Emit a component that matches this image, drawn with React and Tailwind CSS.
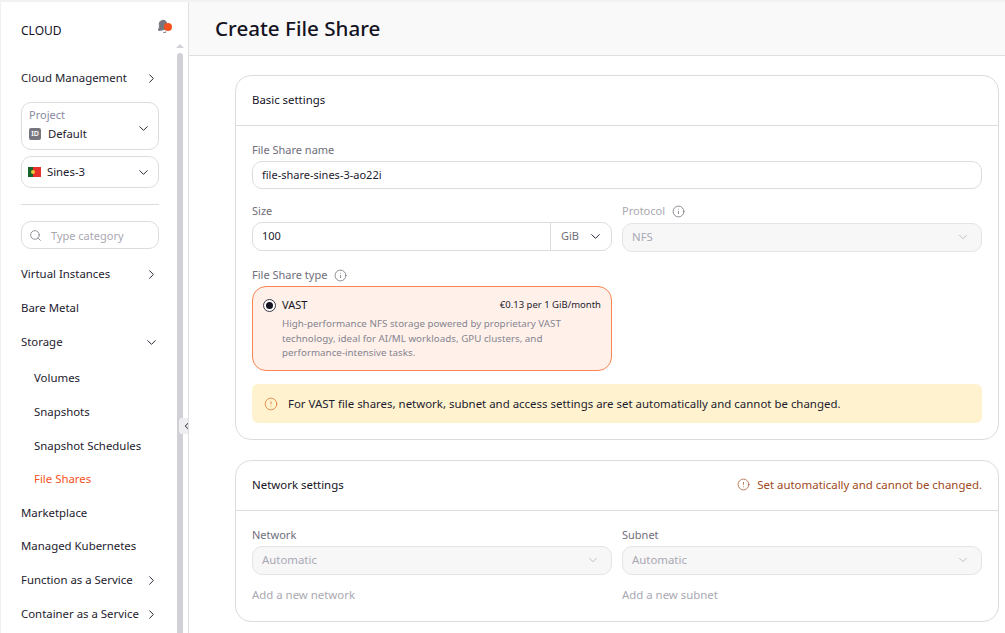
import React from 'react';
import { Bell, ChevronDown, ChevronLeft, ChevronRight, Search, Info, CircleAlert } from 'lucide-react';

const FONT = { fontFamily: '"Noto Sans", sans-serif' };

function NavRow({ label, icon, sub, active, className = 'h-[34px]' }) {
  return (
    <div className={`flex items-center justify-between whitespace-nowrap text-[11.4px] ${className} ${sub ? 'pl-[13px]' : ''} ${active ? 'text-[#f4511e]' : 'text-[#1d1b2e]'}`}>
      <span>{label}</span>
      {icon === 'right' && <ChevronRight size={15} strokeWidth={1.5} />}
      {icon === 'down' && <ChevronDown size={15} strokeWidth={1.5} />}
    </div>
  );
}

function Field({ label, info, disabled, className = '', children }) {
  return (
    <div className={className}>
      <div className={`flex items-center gap-[7px] h-[17px] text-[11px] ${disabled ? 'text-[#a9a8b2]' : 'text-[#6f6e7a]'}`}>
        {label}
        {info && <Info size={13} strokeWidth={1.3} className="text-[#5f5e6a]" />}
      </div>
      {children}
    </div>
  );
}

function DisabledSelect({ value, className = 'mt-[3px]' }) {
  return (
    <div className={`${className} flex items-center justify-between h-[29px] px-[9px] pb-[1px] rounded-[10px] border border-[#e4e4e8] bg-[#f7f7f8] text-[11.4px] text-[#a9a8b2]`}>
      {value}
      <ChevronDown size={14} strokeWidth={1.2} className="text-[#a9a8b2] mr-[2px]" />
    </div>
  );
}

function Sidebar() {
  return (
    <aside className="relative w-[189px] shrink-0 h-full flex pl-[20px] border-r border-[#dfdfe3] border-l border-l-[#f0f0f2] overflow-hidden">
      <div className="w-[138px] shrink-0">
        <div className="flex items-center h-[59px] pb-[2px]">
          <span className="text-[12px] text-[#14131f]">CLOUD</span>
        </div>
        <NavRow label="Cloud Management" icon="right" />
        <div className="mt-[7px] h-[48px] rounded-[10px] border border-[#dcdce0] px-[7px] pt-[4px]">
          <div className="text-[11px] leading-[15px] text-[#8a89a0]">Project</div>
          <div className="mt-[3px] flex items-center justify-between text-[11.3px] leading-[18px] text-[#1d1b2e]">
            <div className="flex items-center gap-[7px]">
              <span className="w-[12px] h-[12px] rounded-[2px] bg-[#77767f] text-white text-[7px] leading-[12px] text-center font-semibold">ID</span>
              Default
            </div>
            <ChevronDown size={15} strokeWidth={1.5} className="-mt-[12px]" />
          </div>
        </div>
        <div className="mt-[6px] h-[32px] rounded-[10px] border border-[#dcdce0] pl-[6px] pr-[7px] flex items-center justify-between text-[11.3px] text-[#1d1b2e]">
          <div className="flex items-center gap-[6px]">
            <svg width="13" height="10" viewBox="0 0 13 10">
              <rect width="13" height="10" fill="#e8302c" />
              <rect width="5" height="10" fill="#14642c" />
              <circle cx="5" cy="5" r="2" fill="#e9c93a" />
            </svg>
            Sines-3
          </div>
          <ChevronDown size={15} strokeWidth={1.5} />
        </div>
        <div className="mt-[16px] border-t border-[#dcdce0]" />
        <div className="mt-[16px] h-[28px] rounded-[10px] border border-[#dcdce0] px-[7px] pt-[2px] flex items-center gap-[9px] text-[11px] text-[#a9a8b2]">
          <Search size={13} strokeWidth={1.4} className="text-[#77767f] -mt-[2px]" />
          Type category
        </div>
        <div className="mt-[8px]">
          <NavRow label="Virtual Instances" icon="right" />
          <NavRow label="Bare Metal" />
          <NavRow label="Storage" icon="down" />
          <NavRow label="Volumes" sub className="h-[34px] mt-[2px]" />
          <NavRow label="Snapshots" sub />
          <NavRow label="Snapshot Schedules" sub className="h-[33.5px]" />
          <NavRow label="File Shares" sub active className="h-[33px]" />
          <NavRow label="Marketplace" />
          <NavRow label="Managed Kubernetes" className="h-[33.5px] pb-[1px]" />
          <NavRow label="Function as a Service" icon="right" />
          <NavRow label="Container as a Service" icon="right" />
        </div>
      </div>
      {/* scrollbar */}
      <div className="ml-[18px] w-[6px] shrink-0 pt-[42px] flex flex-col items-center">
        <div className="w-0 h-0 border-x-[4px] border-x-transparent border-b-[4px] border-b-[#d3d2d8]" />
        <div className="mt-[5px] w-[6px] flex-1 rounded-t-[3px] bg-[#d1d0d6]" />
      </div>
      <div className="absolute left-[178px] top-[416px] w-[15px] h-[16px] rounded-[3px] bg-[#eeeef0] flex items-center justify-center text-[#1d1b2e]">
        <ChevronLeft size={14} strokeWidth={1.6} />
      </div>
      <div className="absolute left-[155px] top-[17px] text-[#77767f]">
        <Bell size={15} fill="#77767f" strokeWidth={1.5} className="-rotate-12" />
        <span className="absolute left-[8px] top-[4px] w-[8px] h-[8px] rounded-full bg-[#f4511e]" />
      </div>
    </aside>
  );
}

export default function App() {
  return (
    <div style={FONT} className="w-[1005px] h-[633px] flex overflow-hidden bg-white border-t-2 border-t-[#f1f1f3]">
      <Sidebar />
      <main className="flex-1 min-w-0 flex flex-col">
        <header className="h-[54px] shrink-0 bg-[#f9f9fa] border-b border-[#dfdfe3] pl-[26px] flex items-center">
          <h1 className="text-[20.6px] font-medium text-[#14131f]">Create File Share</h1>
        </header>
        <div className="pl-[46px] pr-[6px] pt-[19px]">
          <section className="h-[365px] rounded-[16px] border border-[#dcdce0]">
            <div className="h-[50px] border-b border-[#dcdce0] px-[16px] pb-[2px] flex items-center text-[11.4px] text-[#14131f]">
              Basic settings
            </div>
            <div className="px-[16px] pt-[16px]">
              <Field label="File Share name">
                <div className="mt-[2px] h-[28px] rounded-[10px] border border-[#dcdce0] px-[9px] flex items-center text-[11px] text-[#1d1b2e]">
                  file-share-sines-3-ao22i
                </div>
              </Field>
              <div className="mt-[14px] grid grid-cols-2 gap-[10px]">
                <Field label="Size">
                  <div className="mt-[2px] h-[29px] rounded-[10px] border border-[#dcdce0] flex text-[11px] text-[#1d1b2e]">
                    <div className="flex-1 px-[9px] flex items-center">100</div>
                    <div className="w-[61px] border-l border-[#dcdce0] pl-[10px] pr-[8px] flex items-center justify-between text-[#6f6e7a]">
                      GiB
                      <ChevronDown size={15} strokeWidth={1.5} className="text-[#1d1b2e]" />
                    </div>
                  </div>
                </Field>
                <Field label="Protocol" info disabled>
                  <DisabledSelect value="NFS" />
                </Field>
              </div>
              <Field label="File Share type" info className="mt-[15px]">
                <div className="mt-[2px] w-[360px] h-[85px] rounded-[14px] border border-[#fb8550] bg-[#fff1ea] px-[10px] pt-[9px]">
                  <div className="flex items-center h-[18px]">
                    <span className="w-[13px] h-[13px] rounded-full border border-[#3a3946] bg-white flex items-center justify-center">
                      <span className="w-[7px] h-[7px] rounded-full bg-[#14131f]" />
                    </span>
                    <span className="ml-[6px] text-[11px] text-[#14131f]">VAST</span>
                    <span className="ml-auto text-[9.5px] text-[#1d1b2e]">€0.13 per 1 GiB/month</span>
                  </div>
                  <p className="mt-[3px] ml-[19px] w-[300px] text-[9.8px] leading-[14.5px] text-[#85848f]">
                    High-performance NFS storage powered by proprietary VAST technology, ideal for AI/ML workloads, GPU clusters, and performance-intensive tasks.
                  </p>
                </div>
              </Field>
              <div className="mt-[13px] h-[39px] rounded-[6px] bg-[#fff3cf] px-[12px] flex items-center gap-[10px] text-[11.45px] text-[#1d1b2e]">
                <CircleAlert size={14} strokeWidth={1.3} className="text-[#d9742b]" />
                For VAST file shares, network, subnet and access settings are set automatically and cannot be changed.
              </div>
            </div>
          </section>
          <section className="mt-[20px] h-[162px] rounded-[16px] border border-[#dcdce0]">
            <div className="h-[50px] border-b border-[#dcdce0] px-[16px] pb-[2px] flex items-center justify-between text-[11.45px]">
              <span className="text-[#14131f]">Network settings</span>
              <span className="flex items-center gap-[7px] text-[#a04a20]">
                <CircleAlert size={13} strokeWidth={1.3} />
                Set automatically and cannot be changed.
              </span>
            </div>
            <div className="px-[16px] pt-[16px] grid grid-cols-2 gap-[10px]">
              {[['Network', 'Add a new network'], ['Subnet', 'Add a new subnet']].map(([label, add]) => (
                <Field key={label} label={label}>
                  <DisabledSelect value="Automatic" className="mt-[2px]" />
                  <div className="mt-[11px] text-[11.4px] text-[#a9a8b2]">{add}</div>
                </Field>
              ))}
            </div>
          </section>
        </div>
      </main>
    </div>
  );
}
